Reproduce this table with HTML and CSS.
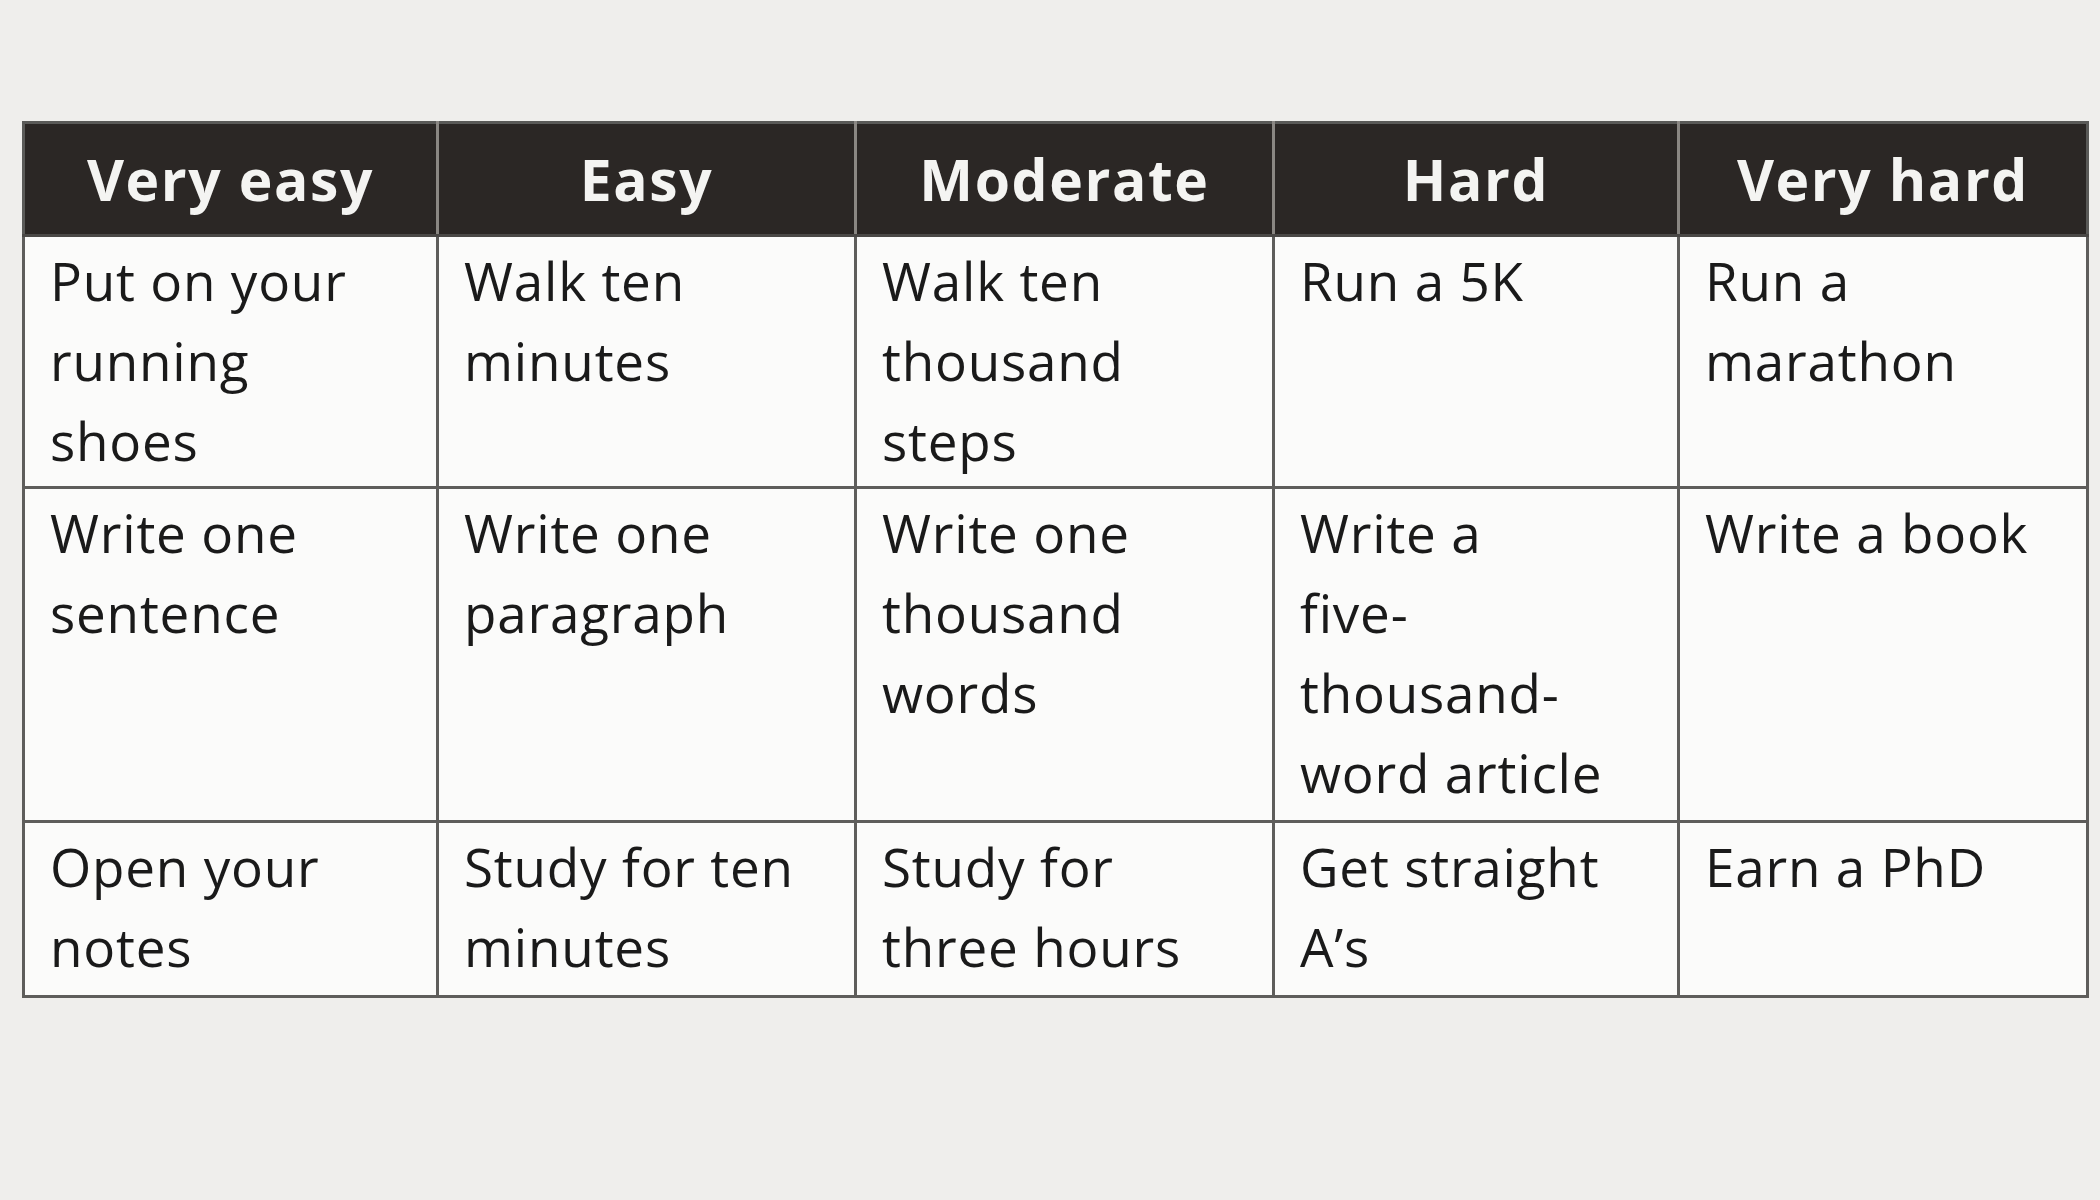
FILE: index.html
```html
<!DOCTYPE html>
<html lang="en">
<head>
<meta charset="utf-8">
<title>Difficulty levels</title>
<link rel="stylesheet" href="styles.css">
</head>
<body>
<main class="page">
  <table class="levels">
    <colgroup>
      <col class="c1"><col class="c2"><col class="c3"><col class="c4"><col class="c5">
    </colgroup>
    <thead>
      <tr>
        <th>Very easy</th>
        <th>Easy</th>
        <th>Moderate</th>
        <th>Hard</th>
        <th>Very hard</th>
      </tr>
    </thead>
    <tbody>
      <tr class="r1">
        <td>Put on your<br>running<br>shoes</td>
        <td>Walk ten minutes</td>
        <td>Walk ten thousand steps</td>
        <td>Run a 5K</td>
        <td>Run a marathon</td>
      </tr>
      <tr class="r2">
        <td>Write one sentence</td>
        <td>Write one paragraph</td>
        <td>Write one thousand words</td>
        <td>Write a<br>five-<br>thousand-<br>word article</td>
        <td>Write a book</td>
      </tr>
      <tr class="r3">
        <td>Open your notes</td>
        <td>Study for ten minutes</td>
        <td>Study for three hours</td>
        <td>Get straight A’s</td>
        <td>Earn a PhD</td>
      </tr>
    </tbody>
  </table>
</main>
</body>
</html>
```

FILE: styles.css
```css
html, body {
  margin: 0;
  padding: 0;
  background: #efeeec;
}

.page {
  width: 2100px;
  height: 1200px;
  padding: 121px 0 0 22px;
  box-sizing: border-box;
  font-family: "Open Sans", "Liberation Sans", sans-serif;
}

.levels {
  border-collapse: collapse;
  table-layout: fixed;
  width: 2064px;
  background: #fbfbfa;
  color: #1a1a1a;
  border: 3px solid #5a5a58;
}

.c1 { width: 414px; }
.c2 { width: 418px; }
.c3 { width: 418px; }
.c4 { width: 405px; }
.c5 { width: 409px; }

.levels th {
  background: #2b2725;
  color: #f4f4f2;
  font-weight: 700;
  font-size: 57px;
  letter-spacing: 1.6px;
  height: 110px;
  padding: 0;
  text-align: center;
  vertical-align: middle;
  border-left: 3px solid #8a8783;
  border-bottom: 3px solid #4a4846;
}

.levels th:first-child {
  border-left: none;
}

.levels td {
  font-size: 53px;
  letter-spacing: 0.8px;
  line-height: 80px;
  font-weight: 400;
  vertical-align: top;
  text-align: left;
  padding: 4px 18px 0 25px;
  border: 3px solid #5e5d5b;
}

.r1 td { height: 245px; }
.r2 td { height: 327px; }
.r3 td { height: 168px; }
```
